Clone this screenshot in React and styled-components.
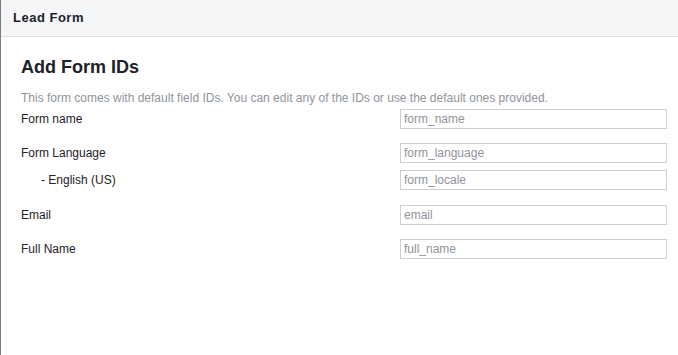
import React from "react";
import styled, { createGlobalStyle } from "styled-components";

const GlobalStyle = createGlobalStyle`
  html, body {
    margin: 0;
    padding: 0;
    background: #ffffff;
  }
  body {
    font-family: "Liberation Sans", Arial, Helvetica, sans-serif;
    color: #1d2129;
  }
`;

const fields = [
  { label: "Form name", value: "form_name", gap: 0 },
  { label: "Form Language", value: "form_language", gap: 14 },
  { label: "- English (US)", value: "form_locale", gap: 7, indent: true },
  { label: "Email", value: "email", gap: 15 },
  { label: "Full Name", value: "full_name", gap: 14 },
];

function App() {
  return (
    <>
      <GlobalStyle />
      <Panel>
        <Header>
          <HeaderTitle>Lead Form</HeaderTitle>
        </Header>
        <Body>
          <Heading>Add Form IDs</Heading>
          <Description>
            This form comes with default field IDs. You can edit any of the IDs
            or use the default ones provided.
          </Description>
          <FieldList>
            {fields.map(f => (
              <Row key={f.value} $gap={f.gap}>
                <Label $indent={f.indent}>{f.label}</Label>
                <IdInput type="text" defaultValue={f.value} />
              </Row>
            ))}
          </FieldList>
        </Body>
      </Panel>
    </>
  );
}

const Panel = styled.div`
  min-height: 355px;
  box-sizing: border-box;
  border-left: 1px solid #7d7d7d;
  background: #ffffff;
`;

const Header = styled.div`
  height: 37px;
  box-sizing: border-box;
  padding: 10px 12px 0;
  background: #f5f6f7;
  border-bottom: 1px solid #dddfe2;
`;

const HeaderTitle = styled.div`
  font-size: 13px;
  line-height: 16px;
  font-weight: bold;
  letter-spacing: 0.5px;
  color: #1d2129;
`;

const Body = styled.div`
  padding: 20px 11px 0 20px;
`;

const Heading = styled.h2`
  margin: 0;
  font-size: 18px;
  line-height: 20px;
  font-weight: bold;
  color: #1d2129;
`;

const Description = styled.div`
  margin-top: 13px;
  font-size: 12px;
  line-height: 16px;
  color: #90949c;
`;

const FieldList = styled.div`
  display: flex;
  flex-direction: column;
  margin-top: 3px;
`;

const Row = styled.div`
  display: flex;
  align-items: center;
  justify-content: space-between;
  margin-top: ${p => p.$gap}px;
`;

const Label = styled.div`
  font-size: 12px;
  line-height: 16px;
  color: #1d2129;
  padding-left: ${p => (p.$indent ? "20px" : "0")};
  margin-top: -1px;
`;

const IdInput = styled.input`
  width: 267px;
  height: 20px;
  box-sizing: border-box;
  margin: 0;
  padding: 0 3px;
  border: 1px solid #ccd0d5;
  border-radius: 0;
  outline: none;
  font-family: "Liberation Sans", Arial, Helvetica, sans-serif;
  font-size: 12px;
  color: #90949c;
  background: #ffffff;
`;

export default App;
